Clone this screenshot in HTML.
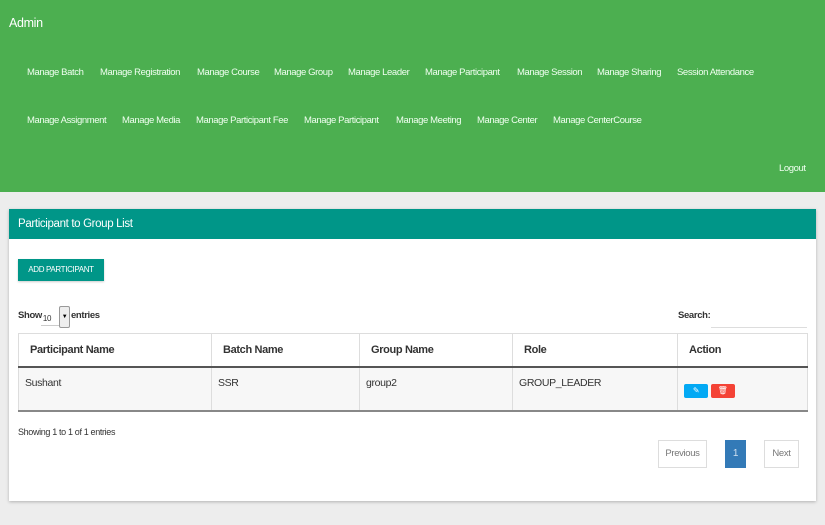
<!DOCTYPE html>
<html><head><style>
body{margin:0;width:825px;height:525px;background:#ededed;font-family:"Liberation Sans",sans-serif;position:relative;overflow:hidden;letter-spacing:-0.35px}
.a{position:absolute;white-space:nowrap}
.hd{position:absolute;left:0;top:0;width:825px;height:192px;background:#4caf50;color:#fff}
.n{position:absolute;font-size:9.5px;color:#f0fff0;white-space:nowrap;letter-spacing:-0.4px}
.panel{position:absolute;left:9px;top:209px;width:807px;height:292px;background:#fff;box-shadow:0 1px 3px rgba(0,0,0,.25)}
.ph{height:30px;background:#009688;color:#fff;font-size:11.5px;line-height:30px;padding-left:9px}
table{position:absolute;left:9px;top:124px;width:790px;border-collapse:collapse;font-size:10.5px;color:#333;table-layout:fixed}
th{height:33px;text-align:left;font-weight:bold;border:1px solid #ddd;border-bottom:2px solid #555;padding:0 11px;font-size:11px;box-sizing:border-box}
td{height:44px;background:#f7f7f7;border:1px solid #ddd;border-bottom:2px solid #888;vertical-align:top;padding:9px 6px 0;box-sizing:border-box}
</style></head><body>
<div class="hd">
<div class="a" style="left:9px;top:16px;font-size:12.5px">Admin</div>
<span class="n" style="left:27px;top:67px">Manage Batch</span>
<span class="n" style="left:100px;top:67px">Manage Registration</span>
<span class="n" style="left:197px;top:67px">Manage Course</span>
<span class="n" style="left:274px;top:67px">Manage Group</span>
<span class="n" style="left:348px;top:67px">Manage Leader</span>
<span class="n" style="left:425px;top:67px">Manage Participant</span>
<span class="n" style="left:517px;top:67px">Manage Session</span>
<span class="n" style="left:597px;top:67px">Manage Sharing</span>
<span class="n" style="left:677px;top:67px">Session Attendance</span>
<span class="n" style="left:27px;top:115px">Manage Assignment</span>
<span class="n" style="left:122px;top:115px">Manage Media</span>
<span class="n" style="left:196px;top:115px">Manage Participant Fee</span>
<span class="n" style="left:304px;top:115px">Manage Participant</span>
<span class="n" style="left:396px;top:115px">Manage Meeting</span>
<span class="n" style="left:477px;top:115px">Manage Center</span>
<span class="n" style="left:553px;top:115px">Manage CenterCourse</span>
<span class="n" style="left:779px;top:163px">Logout</span>
</div>
<div class="panel">
<div class="ph">Participant to Group List</div>
<div class="a" style="left:9px;top:50px;width:86px;height:22px;background:#009688;color:#fff;font-size:8px;line-height:22px;text-align:center;box-shadow:0 1px 2px rgba(0,0,0,.2)">ADD PARTICIPANT</div>
<div class="a" style="left:9px;top:101px;font-size:9.5px;font-weight:bold;color:#333">Show</div>
<div class="a" style="left:32px;top:103px;font-size:8px;color:#333;border-bottom:1px solid #ccc;width:18px;height:13px;line-height:13px">&nbsp;10</div>
<div class="a" style="left:50px;top:97px;width:9px;height:20px;background:#eee;border:1px solid #999;border-radius:2px;font-size:6px;line-height:20px;text-align:center">▼</div>
<div class="a" style="left:62px;top:101px;font-size:9.5px;font-weight:bold;color:#333">entries</div>
<div class="a" style="left:669px;top:101px;font-size:9.5px;font-weight:bold;color:#333">Search:</div>
<div class="a" style="left:702px;top:118px;width:96px;border-bottom:1px solid #ddd"></div>
<table>
<colgroup><col style="width:193px"><col style="width:148px"><col style="width:153px"><col style="width:165px"><col></colgroup>
<tr><th>Participant Name</th><th>Batch Name</th><th>Group Name</th><th>Role</th><th>Action</th></tr>
<tr><td>Sushant</td><td>SSR</td><td>group2</td><td>GROUP_LEADER</td><td style="padding-top:16px;padding-left:6px"><span style="display:inline-block;width:24px;height:14px;background:#03a9f4;color:#fff;font-size:8px;text-align:center;line-height:14px;border-radius:2px">✎</span> <span style="display:inline-block;width:24px;height:14px;background:#f44336;color:#fff;font-size:8px;text-align:center;line-height:14px;border-radius:2px">🗑</span></td></tr>
</table>
<div class="a" style="left:9px;top:218px;font-size:9px;color:#333">Showing 1 to 1 of 1 entries</div>
<div class="a" style="left:649px;top:231px;width:47px;height:26px;border:1px solid #ddd;font-size:9.5px;color:#777;text-align:center;line-height:26px">Previous</div>
<div class="a" style="left:716px;top:231px;width:21px;height:28px;background:#337ab7;color:#cfe0f0;font-size:10px;text-align:center;line-height:28px">1</div>
<div class="a" style="left:755px;top:231px;width:33px;height:26px;border:1px solid #ddd;font-size:9.5px;color:#777;text-align:center;line-height:26px">Next</div>
</div>
</body></html>
